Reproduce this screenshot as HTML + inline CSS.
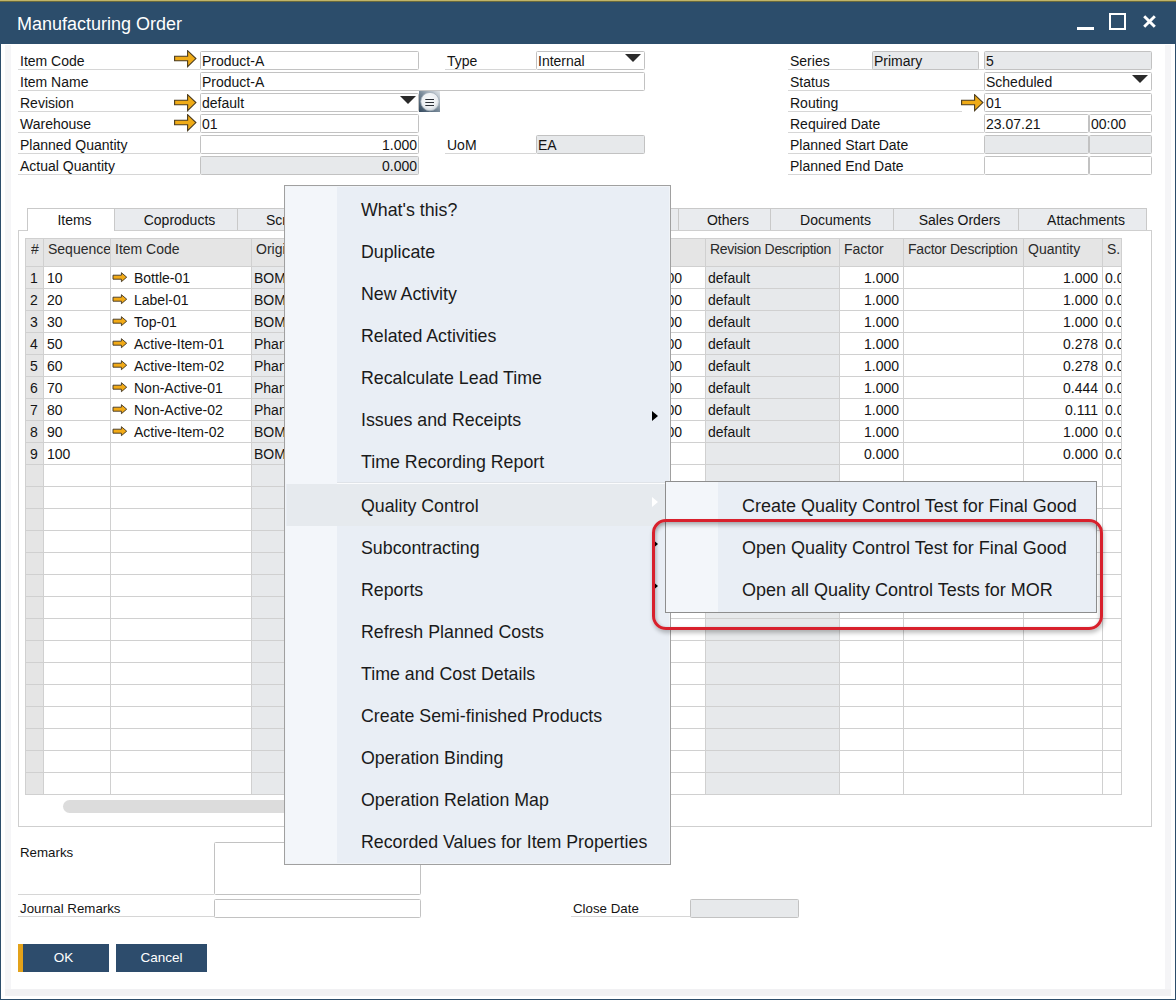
<!DOCTYPE html><html><head><meta charset="utf-8"><style>
*{box-sizing:border-box;margin:0;padding:0}
html,body{width:1176px;height:1000px;overflow:hidden;background:#fff;font-family:"Liberation Sans",sans-serif;color:#111}
.a{position:absolute}
.lbl{position:absolute;font-size:14px;line-height:16px;white-space:nowrap;color:#141414}
.ul{position:absolute;height:1px;background:#d6d6d6}
.f{position:absolute;border:1px solid #c2c2c2;border-radius:1.5px;background:#fff;font-size:14px;line-height:17px;padding:1px 0 0 1px;white-space:nowrap;overflow:hidden;color:#141414}
.f.g{background:#e7e9eb}
.f.r{text-align:right;padding:1px 1px 0 0}
.tri{position:absolute;width:0;height:0;border-left:8px solid transparent;border-right:8px solid transparent;border-top:8px solid #2a2a2a}
.tab{position:absolute;top:208px;height:23px;border:1px solid #c9c9c9;border-bottom:none;background:#e9ebee;font-size:14px;line-height:23px;text-align:center;padding-left:7px;white-space:nowrap;overflow:hidden;color:#141414}
.gc{position:absolute;font-size:14px;line-height:16px;white-space:nowrap;color:#141414}
.mi{position:absolute;left:361px;font-size:17.8px;line-height:20px;white-space:nowrap;color:#1a1a1a}
.smi{position:absolute;left:742px;font-size:18px;line-height:20px;white-space:nowrap;color:#1a1a1a}
</style></head><body>
<div class="a" style="left:0;top:0;width:1176px;height:1000px;background:#2c4d6b"></div>
<div class="a" style="left:0;top:0;width:1176px;height:1px;background:#c0b468"></div>
<div class="a" style="left:0;top:1px;width:1176px;height:1px;background:#6a6a3c"></div>
<div class="a" style="left:17px;top:13px;font-size:18px;line-height:22px;color:#fff;white-space:nowrap">Manufacturing Order</div>
<div class="a" style="left:1077px;top:27px;width:17px;height:3px;background:#fff"></div>
<div class="a" style="left:1109px;top:13px;width:17px;height:17px;border:2px solid #fff"></div>
<svg class="a" style="left:1140px;top:12px" width="19" height="19" viewBox="0 0 19 19"><path d="M4.2 4.2 L14.8 14.8 M14.8 4.2 L4.2 14.8" stroke="#fff" stroke-width="2.9"/></svg>
<div class="a" style="left:1px;top:44px;width:1174px;height:955px;background:#fff"></div>
<div class="a" style="left:5px;top:45px;width:6px;height:944px;background:#f5f5f7"></div>
<div class="a" style="left:1165px;top:45px;width:6px;height:944px;background:#f5f5f7"></div>
<div class="a" style="left:5px;top:989px;width:1166px;height:7px;background:#f1f1f3"></div>
<div class="lbl" style="left:20px;top:53px">Item Code</div>
<div class="ul" style="left:18px;top:69px;width:182px"></div>
<div class="lbl" style="left:20px;top:74px">Item Name</div>
<div class="ul" style="left:18px;top:90px;width:182px"></div>
<div class="lbl" style="left:20px;top:95px">Revision</div>
<div class="ul" style="left:18px;top:111px;width:182px"></div>
<div class="lbl" style="left:20px;top:116px">Warehouse</div>
<div class="ul" style="left:18px;top:132px;width:182px"></div>
<div class="lbl" style="left:20px;top:137px">Planned Quantity</div>
<div class="ul" style="left:18px;top:153px;width:182px"></div>
<div class="lbl" style="left:20px;top:158px">Actual Quantity</div>
<div class="ul" style="left:18px;top:174px;width:182px"></div>
<svg class="a" style="left:174px;top:50px" width="23" height="18" viewBox="0 0 23 18"><path d="M0.6 6.2 H13.6 V0.7 L21.9 8.6 L13.6 16.6 V10.8 H0.6 Z" fill="#efab17" stroke="#4a3a1c" stroke-width="1.1" stroke-linejoin="miter"/></svg>
<svg class="a" style="left:174px;top:94px" width="23" height="18" viewBox="0 0 23 18"><path d="M0.6 6.2 H13.6 V0.7 L21.9 8.6 L13.6 16.6 V10.8 H0.6 Z" fill="#efab17" stroke="#4a3a1c" stroke-width="1.1" stroke-linejoin="miter"/></svg>
<svg class="a" style="left:174px;top:114px" width="23" height="18" viewBox="0 0 23 18"><path d="M0.6 6.2 H13.6 V0.7 L21.9 8.6 L13.6 16.6 V10.8 H0.6 Z" fill="#efab17" stroke="#4a3a1c" stroke-width="1.1" stroke-linejoin="miter"/></svg>
<div class="f" style="left:200px;top:51px;width:219px;height:19px">Product-A</div>
<div class="f" style="left:200px;top:72px;width:445px;height:19px">Product-A</div>
<div class="f" style="left:200px;top:93px;width:219px;height:19px">default</div>
<div class="tri" style="left:400px;top:96px"></div>
<div class="f" style="left:200px;top:114px;width:219px;height:19px">01</div>
<div class="f r" style="left:200px;top:135px;width:219px;height:19px">1.000</div>
<div class="f g r" style="left:200px;top:156px;width:219px;height:19px">0.000</div>
<svg class="a" style="left:419px;top:91px" width="21" height="21" viewBox="0 0 21 21"><defs><linearGradient id="bg1" x1="0" y1="1" x2="1" y2="0"><stop offset="0" stop-color="#33495e"/><stop offset="0.5" stop-color="#7b8c9b"/><stop offset="1" stop-color="#e3e7ea"/></linearGradient><radialGradient id="cg1" cx="0.45" cy="0.4" r="0.6"><stop offset="0" stop-color="#f7f9fa"/><stop offset="0.7" stop-color="#eceff2"/><stop offset="1" stop-color="#c9d1d8"/></radialGradient></defs><rect x="0" y="0" width="21" height="21" fill="url(#bg1)"/><circle cx="11" cy="10.6" r="9.2" fill="url(#cg1)" stroke="#a4b0ba" stroke-width="0.8"/><path d="M6.3 8.5H15M6.3 11.5H15M6.3 14.5H15" stroke="#2a2f36" stroke-width="1"/></svg>
<div class="lbl" style="left:447px;top:53px">Type</div>
<div class="ul" style="left:445px;top:69px;width:91px"></div>
<div class="f" style="left:536px;top:51px;width:109px;height:19px">Internal</div>
<div class="tri" style="left:625px;top:54px"></div>
<div class="lbl" style="left:447px;top:137px">UoM</div>
<div class="ul" style="left:445px;top:153px;width:91px"></div>
<div class="f g" style="left:536px;top:135px;width:109px;height:19px">EA</div>
<div class="lbl" style="left:790px;top:53px">Series</div>
<div class="ul" style="left:788px;top:69px;width:196px"></div>
<div class="lbl" style="left:790px;top:74px">Status</div>
<div class="ul" style="left:788px;top:90px;width:196px"></div>
<div class="lbl" style="left:790px;top:95px">Routing</div>
<div class="ul" style="left:788px;top:111px;width:174px"></div>
<div class="lbl" style="left:790px;top:116px">Required Date</div>
<div class="ul" style="left:788px;top:132px;width:196px"></div>
<div class="lbl" style="left:790px;top:137px">Planned Start Date</div>
<div class="ul" style="left:788px;top:153px;width:196px"></div>
<div class="lbl" style="left:790px;top:158px">Planned End Date</div>
<div class="ul" style="left:788px;top:174px;width:196px"></div>
<div class="f g" style="left:872px;top:51px;width:107px;height:19px">Primary</div>
<div class="f g" style="left:984px;top:51px;width:168px;height:19px">5</div>
<div class="f" style="left:984px;top:72px;width:168px;height:19px">Scheduled</div>
<div class="tri" style="left:1132px;top:75px"></div>
<svg class="a" style="left:961px;top:94px" width="23" height="18" viewBox="0 0 23 18"><path d="M0.6 6.2 H13.6 V0.7 L21.9 8.6 L13.6 16.6 V10.8 H0.6 Z" fill="#efab17" stroke="#4a3a1c" stroke-width="1.1" stroke-linejoin="miter"/></svg>
<div class="f" style="left:984px;top:93px;width:168px;height:19px">01</div>
<div class="f" style="left:984px;top:114px;width:105px;height:19px">23.07.21</div>
<div class="f" style="left:1089px;top:114px;width:63px;height:19px">00:00</div>
<div class="f g" style="left:984px;top:135px;width:105px;height:19px"></div>
<div class="f g" style="left:1089px;top:135px;width:63px;height:19px"></div>
<div class="f" style="left:984px;top:156px;width:105px;height:19px"></div>
<div class="f" style="left:1089px;top:156px;width:63px;height:19px"></div>
<div class="a" style="left:18px;top:230px;width:1134px;height:597px;border:1px solid #cfcfcf;background:#fff"></div>
<div class="tab" style="left:27px;width:88px;background:#fff;height:23px">Items</div>
<div class="tab" style="left:114px;width:124px;height:22px">Coproducts</div>
<div class="tab" style="left:237px;width:164px;height:22px;text-align:left;padding-left:28px">Scrap</div>
<div class="tab" style="left:360px;width:161px;height:22px">Route Stages</div>
<div class="tab" style="left:520px;width:159px;height:22px">Planning</div>
<div class="tab" style="left:678px;width:93px;height:22px">Others</div>
<div class="tab" style="left:770px;width:124px;height:22px">Documents</div>
<div class="tab" style="left:893px;width:126px;height:22px">Sales Orders</div>
<div class="tab" style="left:1018px;width:129px;height:22px">Attachments</div>
<div class="a" style="left:25px;top:238px;width:1097px;height:557px;background:#fff;overflow:hidden">
<div class="a" style="left:0;top:0;width:1097px;height:28px;background:#e5e5e5"></div>
<div class="a" style="left:0px;top:28px;width:18px;height:528px;background:#e5e5e5"></div>
<div class="a" style="left:226px;top:28px;width:79px;height:528px;background:#e7e9eb"></div>
<div class="a" style="left:680px;top:28px;width:134px;height:528px;background:#e7e9eb"></div>
<div class="a" style="left:0;top:28px;width:1097px;height:1px;background:#d0d0d0"></div>
<div class="a" style="left:0;top:50px;width:1097px;height:1px;background:#d0d0d0"></div>
<div class="a" style="left:0;top:72px;width:1097px;height:1px;background:#d0d0d0"></div>
<div class="a" style="left:0;top:94px;width:1097px;height:1px;background:#d0d0d0"></div>
<div class="a" style="left:0;top:116px;width:1097px;height:1px;background:#d0d0d0"></div>
<div class="a" style="left:0;top:138px;width:1097px;height:1px;background:#d0d0d0"></div>
<div class="a" style="left:0;top:160px;width:1097px;height:1px;background:#d0d0d0"></div>
<div class="a" style="left:0;top:182px;width:1097px;height:1px;background:#d0d0d0"></div>
<div class="a" style="left:0;top:204px;width:1097px;height:1px;background:#d0d0d0"></div>
<div class="a" style="left:0;top:226px;width:1097px;height:1px;background:#d0d0d0"></div>
<div class="a" style="left:0;top:248px;width:1097px;height:1px;background:#d0d0d0"></div>
<div class="a" style="left:0;top:270px;width:1097px;height:1px;background:#d0d0d0"></div>
<div class="a" style="left:0;top:292px;width:1097px;height:1px;background:#d0d0d0"></div>
<div class="a" style="left:0;top:314px;width:1097px;height:1px;background:#d0d0d0"></div>
<div class="a" style="left:0;top:336px;width:1097px;height:1px;background:#d0d0d0"></div>
<div class="a" style="left:0;top:358px;width:1097px;height:1px;background:#d0d0d0"></div>
<div class="a" style="left:0;top:380px;width:1097px;height:1px;background:#d0d0d0"></div>
<div class="a" style="left:0;top:402px;width:1097px;height:1px;background:#d0d0d0"></div>
<div class="a" style="left:0;top:424px;width:1097px;height:1px;background:#d0d0d0"></div>
<div class="a" style="left:0;top:446px;width:1097px;height:1px;background:#d0d0d0"></div>
<div class="a" style="left:0;top:468px;width:1097px;height:1px;background:#d0d0d0"></div>
<div class="a" style="left:0;top:490px;width:1097px;height:1px;background:#d0d0d0"></div>
<div class="a" style="left:0;top:512px;width:1097px;height:1px;background:#d0d0d0"></div>
<div class="a" style="left:0;top:534px;width:1097px;height:1px;background:#d0d0d0"></div>
<div class="a" style="left:0;top:556px;width:1097px;height:1px;background:#d0d0d0"></div>
<div class="a" style="left:0;top:0;width:1097px;height:1px;background:#d0d0d0"></div>
<div class="a" style="left:0px;top:0;width:1px;height:557px;background:#d0d0d0"></div>
<div class="a" style="left:18px;top:0;width:1px;height:557px;background:#d0d0d0"></div>
<div class="a" style="left:85px;top:0;width:1px;height:557px;background:#d0d0d0"></div>
<div class="a" style="left:226px;top:0;width:1px;height:557px;background:#d0d0d0"></div>
<div class="a" style="left:305px;top:0;width:1px;height:557px;background:#d0d0d0"></div>
<div class="a" style="left:405px;top:0;width:1px;height:557px;background:#d0d0d0"></div>
<div class="a" style="left:495px;top:0;width:1px;height:557px;background:#d0d0d0"></div>
<div class="a" style="left:575px;top:0;width:1px;height:557px;background:#d0d0d0"></div>
<div class="a" style="left:680px;top:0;width:1px;height:557px;background:#d0d0d0"></div>
<div class="a" style="left:814px;top:0;width:1px;height:557px;background:#d0d0d0"></div>
<div class="a" style="left:878px;top:0;width:1px;height:557px;background:#d0d0d0"></div>
<div class="a" style="left:998px;top:0;width:1px;height:557px;background:#d0d0d0"></div>
<div class="a" style="left:1077px;top:0;width:1px;height:557px;background:#d0d0d0"></div>
<div class="a" style="left:1096px;top:0;width:1px;height:557px;background:#d0d0d0"></div>
<div class="gc" style="left:6px;top:3px;width:12px;overflow:hidden;color:#2a2a2a;letter-spacing:0px">#</div>
<div class="gc" style="left:23px;top:3px;width:62px;overflow:hidden;color:#2a2a2a;letter-spacing:0px">Sequence</div>
<div class="gc" style="left:90px;top:3px;width:136px;overflow:hidden;color:#2a2a2a;letter-spacing:0px">Item Code</div>
<div class="gc" style="left:231px;top:3px;width:74px;overflow:hidden;color:#2a2a2a;letter-spacing:0px">Origin</div>
<div class="gc" style="left:685px;top:3px;width:129px;overflow:hidden;color:#2a2a2a;letter-spacing:-0.33px">Revision Description</div>
<div class="gc" style="left:819px;top:3px;width:59px;overflow:hidden;color:#2a2a2a;letter-spacing:0px">Factor</div>
<div class="gc" style="left:883px;top:3px;width:115px;overflow:hidden;color:#2a2a2a;letter-spacing:-0.23px">Factor Description</div>
<div class="gc" style="left:1003px;top:3px;width:74px;overflow:hidden;color:#2a2a2a;letter-spacing:0px">Quantity</div>
<div class="gc" style="left:1082px;top:3px;width:14px;overflow:hidden;color:#2a2a2a;letter-spacing:0px">S.</div>
</div>
<div class="a" style="left:25px;top:238px;width:1096px;height:556px;overflow:hidden">
<div class="gc" style="left:5px;top:32px">1</div>
<div class="gc" style="left:22px;top:32px">10</div>
<svg class="a" style="left:87px;top:34px" width="16" height="12" viewBox="0 0 16 12"><path d="M1 3.2 H9.4 V0.7 L14.7 5.2 L9.4 9.7 V7.2 H1 Z" fill="#f2aa16" stroke="#3d3322" stroke-width="0.9"/></svg>
<div class="gc" style="left:109px;top:32px">Bottle-01</div>
<div class="gc" style="left:229px;top:32px">BOM</div>
<div class="gc" style="left:595px;top:32px;width:62px;text-align:right">0.000</div>
<div class="gc" style="left:683px;top:32px">default</div>
<div class="gc" style="left:814px;top:32px;width:60px;text-align:right">1.000</div>
<div class="gc" style="left:998px;top:32px;width:75px;text-align:right">1.000</div>
<div class="gc" style="left:1080px;top:32px">0.000</div>
<div class="gc" style="left:5px;top:54px">2</div>
<div class="gc" style="left:22px;top:54px">20</div>
<svg class="a" style="left:87px;top:56px" width="16" height="12" viewBox="0 0 16 12"><path d="M1 3.2 H9.4 V0.7 L14.7 5.2 L9.4 9.7 V7.2 H1 Z" fill="#f2aa16" stroke="#3d3322" stroke-width="0.9"/></svg>
<div class="gc" style="left:109px;top:54px">Label-01</div>
<div class="gc" style="left:229px;top:54px">BOM</div>
<div class="gc" style="left:595px;top:54px;width:62px;text-align:right">0.000</div>
<div class="gc" style="left:683px;top:54px">default</div>
<div class="gc" style="left:814px;top:54px;width:60px;text-align:right">1.000</div>
<div class="gc" style="left:998px;top:54px;width:75px;text-align:right">1.000</div>
<div class="gc" style="left:1080px;top:54px">0.000</div>
<div class="gc" style="left:5px;top:76px">3</div>
<div class="gc" style="left:22px;top:76px">30</div>
<svg class="a" style="left:87px;top:78px" width="16" height="12" viewBox="0 0 16 12"><path d="M1 3.2 H9.4 V0.7 L14.7 5.2 L9.4 9.7 V7.2 H1 Z" fill="#f2aa16" stroke="#3d3322" stroke-width="0.9"/></svg>
<div class="gc" style="left:109px;top:76px">Top-01</div>
<div class="gc" style="left:229px;top:76px">BOM</div>
<div class="gc" style="left:595px;top:76px;width:62px;text-align:right">0.000</div>
<div class="gc" style="left:683px;top:76px">default</div>
<div class="gc" style="left:814px;top:76px;width:60px;text-align:right">1.000</div>
<div class="gc" style="left:998px;top:76px;width:75px;text-align:right">1.000</div>
<div class="gc" style="left:1080px;top:76px">0.000</div>
<div class="gc" style="left:5px;top:98px">4</div>
<div class="gc" style="left:22px;top:98px">50</div>
<svg class="a" style="left:87px;top:100px" width="16" height="12" viewBox="0 0 16 12"><path d="M1 3.2 H9.4 V0.7 L14.7 5.2 L9.4 9.7 V7.2 H1 Z" fill="#f2aa16" stroke="#3d3322" stroke-width="0.9"/></svg>
<div class="gc" style="left:109px;top:98px">Active-Item-01</div>
<div class="gc" style="left:229px;top:98px">Phantom</div>
<div class="gc" style="left:595px;top:98px;width:62px;text-align:right">0.000</div>
<div class="gc" style="left:683px;top:98px">default</div>
<div class="gc" style="left:814px;top:98px;width:60px;text-align:right">1.000</div>
<div class="gc" style="left:998px;top:98px;width:75px;text-align:right">0.278</div>
<div class="gc" style="left:1080px;top:98px">0.000</div>
<div class="gc" style="left:5px;top:120px">5</div>
<div class="gc" style="left:22px;top:120px">60</div>
<svg class="a" style="left:87px;top:122px" width="16" height="12" viewBox="0 0 16 12"><path d="M1 3.2 H9.4 V0.7 L14.7 5.2 L9.4 9.7 V7.2 H1 Z" fill="#f2aa16" stroke="#3d3322" stroke-width="0.9"/></svg>
<div class="gc" style="left:109px;top:120px">Active-Item-02</div>
<div class="gc" style="left:229px;top:120px">Phantom</div>
<div class="gc" style="left:595px;top:120px;width:62px;text-align:right">0.000</div>
<div class="gc" style="left:683px;top:120px">default</div>
<div class="gc" style="left:814px;top:120px;width:60px;text-align:right">1.000</div>
<div class="gc" style="left:998px;top:120px;width:75px;text-align:right">0.278</div>
<div class="gc" style="left:1080px;top:120px">0.000</div>
<div class="gc" style="left:5px;top:142px">6</div>
<div class="gc" style="left:22px;top:142px">70</div>
<svg class="a" style="left:87px;top:144px" width="16" height="12" viewBox="0 0 16 12"><path d="M1 3.2 H9.4 V0.7 L14.7 5.2 L9.4 9.7 V7.2 H1 Z" fill="#f2aa16" stroke="#3d3322" stroke-width="0.9"/></svg>
<div class="gc" style="left:109px;top:142px">Non-Active-01</div>
<div class="gc" style="left:229px;top:142px">Phantom</div>
<div class="gc" style="left:595px;top:142px;width:62px;text-align:right">0.000</div>
<div class="gc" style="left:683px;top:142px">default</div>
<div class="gc" style="left:814px;top:142px;width:60px;text-align:right">1.000</div>
<div class="gc" style="left:998px;top:142px;width:75px;text-align:right">0.444</div>
<div class="gc" style="left:1080px;top:142px">0.000</div>
<div class="gc" style="left:5px;top:164px">7</div>
<div class="gc" style="left:22px;top:164px">80</div>
<svg class="a" style="left:87px;top:166px" width="16" height="12" viewBox="0 0 16 12"><path d="M1 3.2 H9.4 V0.7 L14.7 5.2 L9.4 9.7 V7.2 H1 Z" fill="#f2aa16" stroke="#3d3322" stroke-width="0.9"/></svg>
<div class="gc" style="left:109px;top:164px">Non-Active-02</div>
<div class="gc" style="left:229px;top:164px">Phantom</div>
<div class="gc" style="left:595px;top:164px;width:62px;text-align:right">0.000</div>
<div class="gc" style="left:683px;top:164px">default</div>
<div class="gc" style="left:814px;top:164px;width:60px;text-align:right">1.000</div>
<div class="gc" style="left:998px;top:164px;width:75px;text-align:right">0.111</div>
<div class="gc" style="left:1080px;top:164px">0.000</div>
<div class="gc" style="left:5px;top:186px">8</div>
<div class="gc" style="left:22px;top:186px">90</div>
<svg class="a" style="left:87px;top:188px" width="16" height="12" viewBox="0 0 16 12"><path d="M1 3.2 H9.4 V0.7 L14.7 5.2 L9.4 9.7 V7.2 H1 Z" fill="#f2aa16" stroke="#3d3322" stroke-width="0.9"/></svg>
<div class="gc" style="left:109px;top:186px">Active-Item-02</div>
<div class="gc" style="left:229px;top:186px">BOM</div>
<div class="gc" style="left:595px;top:186px;width:62px;text-align:right">0.000</div>
<div class="gc" style="left:683px;top:186px">default</div>
<div class="gc" style="left:814px;top:186px;width:60px;text-align:right">1.000</div>
<div class="gc" style="left:998px;top:186px;width:75px;text-align:right">1.000</div>
<div class="gc" style="left:1080px;top:186px">0.000</div>
<div class="gc" style="left:5px;top:208px">9</div>
<div class="gc" style="left:22px;top:208px">100</div>
<div class="gc" style="left:229px;top:208px">BOM</div>
<div class="gc" style="left:814px;top:208px;width:60px;text-align:right">0.000</div>
<div class="gc" style="left:998px;top:208px;width:75px;text-align:right">0.000</div>
<div class="gc" style="left:1080px;top:208px">0.000</div>
</div>
<div class="a" style="left:63px;top:800px;width:560px;height:13px;border-radius:7px;background:#dcdcdc"></div>
<div class="lbl" style="left:20px;top:845px;font-size:13.3px">Remarks</div>
<div class="ul" style="left:18px;top:894px;width:196px"></div>
<div class="f" style="left:214px;top:842px;width:207px;height:53px"></div>
<div class="lbl" style="left:20px;top:901px;font-size:13.3px">Journal Remarks</div>
<div class="ul" style="left:18px;top:916px;width:196px"></div>
<div class="f" style="left:214px;top:899px;width:207px;height:19px"></div>
<div class="lbl" style="left:573px;top:901px;font-size:13.3px">Close Date</div>
<div class="ul" style="left:571px;top:916px;width:119px"></div>
<div class="f g" style="left:690px;top:899px;width:109px;height:19px"></div>
<div class="a" style="left:18px;top:944px;width:91px;height:28px;background:#2d4c6c"></div>
<div class="a" style="left:18px;top:944px;width:5px;height:28px;background:#e3a21a"></div>
<div class="a" style="left:18px;top:944px;width:91px;height:28px;color:#fff;font-size:13.5px;line-height:28px;text-align:center">OK</div>
<div class="a" style="left:116px;top:944px;width:91px;height:28px;background:#2d4c6c;color:#fff;font-size:13.5px;line-height:28px;text-align:center">Cancel</div>
<div class="a" style="left:284px;top:185px;width:387px;height:680px;border:1px solid #a0a0a0;background:#e9eef5;box-shadow:inset 0 0 0 1px #f1f4f8"></div>
<div class="a" style="left:286px;top:187px;width:51px;height:297px;background:#f3f6fa"></div>
<div class="a" style="left:286px;top:526px;width:51px;height:337px;background:#f3f6fa"></div>
<div class="a" style="left:337px;top:482px;width:333px;height:1px;background:#dfe3e8"></div>
<div class="a" style="left:337px;top:483px;width:333px;height:1px;background:#fbfcfd"></div>
<div class="a" style="left:287px;top:484px;width:382px;height:42px;background:#e6eaee"></div>
<div class="mi" style="top:200px">What's this?</div>
<div class="mi" style="top:242px">Duplicate</div>
<div class="mi" style="top:284px">New Activity</div>
<div class="mi" style="top:326px">Related Activities</div>
<div class="mi" style="top:368px">Recalculate Lead Time</div>
<div class="mi" style="top:410px">Issues and Receipts</div>
<div class="mi" style="top:452px">Time Recording Report</div>
<div class="mi" style="top:496px">Quality Control</div>
<div class="mi" style="top:538px">Subcontracting</div>
<div class="mi" style="top:580px">Reports</div>
<div class="mi" style="top:622px">Refresh Planned Costs</div>
<div class="mi" style="top:664px">Time and Cost Details</div>
<div class="mi" style="top:706px">Create Semi-finished Products</div>
<div class="mi" style="top:748px">Operation Binding</div>
<div class="mi" style="top:790px">Operation Relation Map</div>
<div class="mi" style="top:832px">Recorded Values for Item Properties</div>
<div class="a" style="left:652px;top:411px;width:0;height:0;border-top:5.5px solid transparent;border-bottom:5.5px solid transparent;border-left:6px solid #000"></div>
<div class="a" style="left:652px;top:497px;width:0;height:0;border-top:5.5px solid transparent;border-bottom:5.5px solid transparent;border-left:6px solid #fff"></div>
<div class="a" style="left:652px;top:539px;width:0;height:0;border-top:5.5px solid transparent;border-bottom:5.5px solid transparent;border-left:6px solid #000"></div>
<div class="a" style="left:652px;top:581px;width:0;height:0;border-top:5.5px solid transparent;border-bottom:5.5px solid transparent;border-left:6px solid #000"></div>
<div class="a" style="left:665px;top:481px;width:432px;height:132px;border:1px solid #8e8e8e;background:#e9eef5"></div>
<div class="a" style="left:666px;top:482px;width:52px;height:130px;background:#f3f6fa"></div>
<div class="smi" style="top:496px">Create Quality Control Test for Final Good</div>
<div class="smi" style="top:538px">Open Quality Control Test for Final Good</div>
<div class="smi" style="top:580px">Open all Quality Control Tests for MOR</div>
<div class="a" style="left:652px;top:519px;width:451px;height:111px;border:3px solid #d8202c;border-radius:14px;box-shadow:inset 0 3px 4px rgba(0,0,0,0.28), inset 2px 0 3px rgba(0,0,0,0.08), 1px 3px 4px rgba(0,0,0,0.25)"></div>
</body></html>
